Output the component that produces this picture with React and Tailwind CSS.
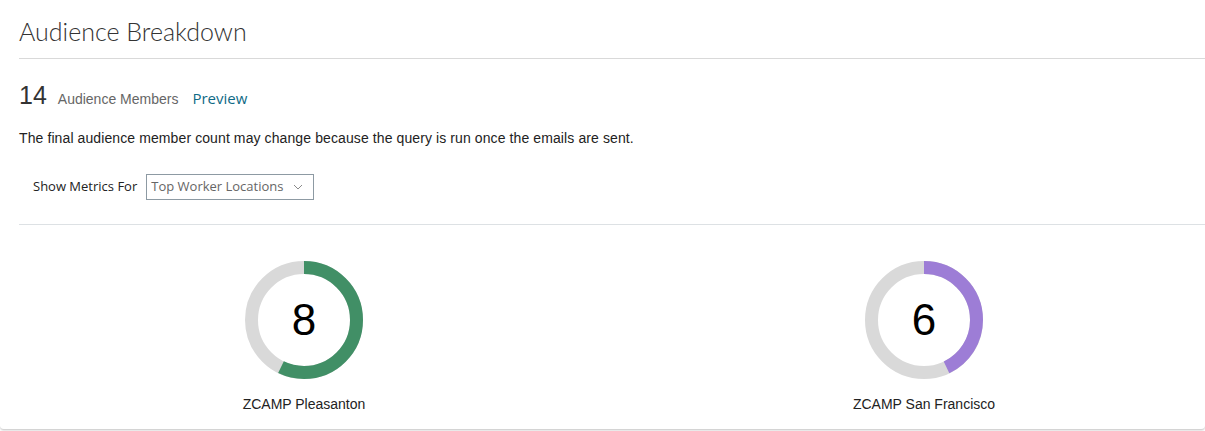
import React from "react";

function Donut({ value, total, color }) {
  const r = 52.5;
  const c = 2 * Math.PI * r;
  const frac = value / total;
  return (
    <div className="relative w-[118px] h-[118px]">
      <svg width="118" height="118" viewBox="0 0 118 118" className="block">
        <circle cx="59" cy="59" r={r} fill="none" stroke="#d9d9d9" strokeWidth="13" />
        <circle
          cx="59"
          cy="59"
          r={r}
          fill="none"
          stroke={color}
          strokeWidth="13"
          strokeDasharray={`${c * frac} ${c}`}
          transform="rotate(-90 59 59)"
        />
      </svg>
      <div className="absolute inset-0 flex items-center justify-center text-[44px] leading-none text-black font-['Liberation_Sans',Arial,sans-serif]">
        {value}
      </div>
    </div>
  );
}

export default function App() {
  return (
    <div className="w-[1205px] h-[431px] bg-white overflow-hidden">
      <div className="h-[430px] bg-white border-b border-[#d4d4d4] rounded-b-[4px] shadow-[0_1px_2px_rgba(0,0,0,0.12)] pl-[19px]">
        <div className="h-[59px] border-b border-[#d9d9d9] pt-[15px]">
          <h1 className="text-[25px] leading-[32px] font-light text-[#333333] font-['Lato',sans-serif]">
            Audience Breakdown
          </h1>
        </div>

        <div className="mt-[24px] flex items-baseline leading-none">
          <span className="text-[25px] text-[#333333] font-['Liberation_Sans',Arial,sans-serif]">14</span>
          <span className="ml-[11px] text-[14px] text-[#666666] font-['Liberation_Sans',Arial,sans-serif]">
            Audience Members
          </span>
          <span className="ml-[14px] text-[15px] text-[#0f6a86] font-['Open_Sans',sans-serif]">Preview</span>
        </div>

        <p className="mt-[22px] text-[14px] leading-[16px] tracking-[0.1px] text-[#222222] font-['Liberation_Sans',Arial,sans-serif]">
          The final audience member count may change because the query is run once the emails are sent.
        </p>

        <div className="mt-[28px] pl-[14px] flex items-center h-[26px]">
          <span className="text-[13px] text-[#222222] font-['Open_Sans',sans-serif]">Show Metrics For</span>
          <div className="ml-[9px] w-[168px] h-[26px] border border-[#8d9aa3] flex items-center justify-between pl-[4px] pr-[10px]">
            <span className="text-[13px] text-[#666666] font-['Open_Sans',sans-serif]">Top Worker Locations</span>
            <svg width="10" height="6" viewBox="0 0 10 6" className="block">
              <path d="M1 1 L5 5 L9 1" fill="none" stroke="#8a8a8a" strokeWidth="1" />
            </svg>
          </div>
        </div>

        <div className="mt-[24px] border-t border-[#dde1e4]" />

        <div className="mt-[36px] flex">
          <div className="ml-[165px] w-[240px] flex flex-col items-center">
            <Donut value={8} total={14} color="#418f66" />
            <div className="mt-[17px] text-[14px] leading-[16px] text-[#222222] font-['Liberation_Sans',Arial,sans-serif]">
              ZCAMP Pleasanton
            </div>
          </div>
          <div className="ml-[380px] w-[240px] flex flex-col items-center">
            <Donut value={6} total={14} color="#9d7dd6" />
            <div className="mt-[17px] text-[14px] leading-[16px] text-[#222222] font-['Liberation_Sans',Arial,sans-serif]">
              ZCAMP San Francisco
            </div>
          </div>
        </div>
      </div>
    </div>
  );
}
